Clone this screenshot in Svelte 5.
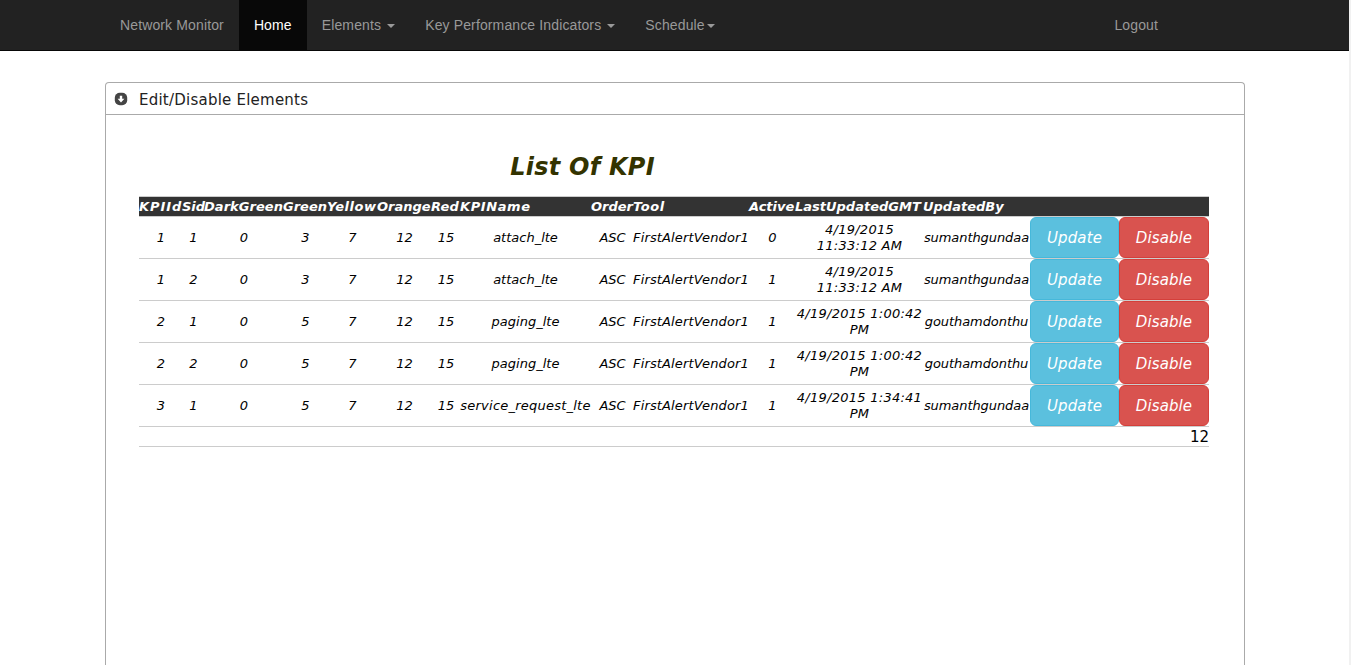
<script>
  const columns = [
    { name: 'KPIId', width: 43, spacing: 0.9 },
    { name: 'Sid', width: 22, spacing: 0 },
    { name: 'DarkGreen', width: 79, spacing: 0.05 },
    { name: 'Green', width: 44, spacing: 0 },
    { name: 'Yellow', width: 50, spacing: 0.5 },
    { name: 'Orange', width: 54, spacing: 0 },
    { name: 'Red', width: 29, spacing: 0.2 },
    { name: 'KPIName', width: 131, spacing: 0.6 },
    { name: 'Order', width: 42, spacing: 0 },
    { name: 'Tool', width: 116, spacing: 0.6 },
    { name: 'Active', width: 46, spacing: 0 },
    { name: 'LastUpdatedGMT', width: 128, spacing: 0 },
    { name: 'UpdatedBy', width: 107, spacing: 0 },
    { name: '', width: 89, spacing: 0 },
    { name: '', width: 90, spacing: 0 }
  ];

  const tool = 'FirstAlertVendor1';
  const rows = [
    [1, 1, 0, 3, 7, 12, 15, 'attach_lte', 'ASC', tool, 0, '4/19/2015\n11:33:12 AM', 'sumanthgundaa'],
    [1, 2, 0, 3, 7, 12, 15, 'attach_lte', 'ASC', tool, 1, '4/19/2015\n11:33:12 AM', 'sumanthgundaa'],
    [2, 1, 0, 5, 7, 12, 15, 'paging_lte', 'ASC', tool, 1, '4/19/2015 1:00:42\nPM', 'gouthamdonthu'],
    [2, 2, 0, 5, 7, 12, 15, 'paging_lte', 'ASC', tool, 1, '4/19/2015 1:00:42\nPM', 'gouthamdonthu'],
    [3, 1, 0, 5, 7, 12, 15, 'service_request_lte', 'ASC', tool, 1, '4/19/2015 1:34:41\nPM', 'sumanthgundaa']
  ];
</script>

<div class="page">
  <nav>
    <a class="brand" href="#home">Network Monitor</a>
    <a class="active" href="#home">Home</a>
    <a href="#elements">Elements <b class="caret"></b></a>
    <a href="#kpi">Key Performance Indicators <b class="caret"></b></a>
    <a href="#schedule">Schedule<b class="caret"></b></a>
    <a class="logout" href="#logout">Logout</a>
  </nav>

  <main>
    <header>
      <svg width="12" height="12" viewBox="0 0 12 12">
        <rect x="-0.2" y="-0.2" width="12.4" height="12.4" rx="5" fill="#444" />
        <path d="M4.8 2.8h2.4v3h2.2L6 9.4 2.6 5.8h2.2z" fill="#fff" />
      </svg>
      <span>Edit/Disable Elements</span>
    </header>

    <section>
      <h1>List Of KPI</h1>
      <table>
        <colgroup>
          {#each columns as column}<col style="width: {column.width}px" />{/each}
        </colgroup>
        <thead>
          <tr>{#each columns as column}<th style="letter-spacing: {column.spacing}px">{column.name}</th>{/each}</tr>
        </thead>
        <tbody>
          {#each rows as row}
            <tr>
              {#each row as value, i}
                <td class:number={i < 7} class:date={i === 11} class:long={i === 7 && value.length > 12} class:tool={i === 9} class:centered={i === 8 || i === 10} class:user={i === 12}>{value}</td>
              {/each}
              <td><button class="update">Update</button></td>
              <td><button class="disable">Disable</button></td>
            </tr>
          {/each}
          <tr class="pager"><td colspan="15">12</td></tr>
        </tbody>
      </table>
    </section>
  </main>
</div>

<style>
  :global(body) { margin: 0; background: #fff; }

  .page {
    box-sizing: border-box;
    height: 665px;
    overflow: hidden;
    display: flex;
    flex-direction: column;
    border-right: 2px solid #f1f1f1;
    font-family: 'DejaVu Sans', Verdana, sans-serif;
  }

  nav {
    box-sizing: border-box;
    flex: none;
    height: 51px;
    padding: 0 176px 0 105px;
    display: flex;
    background: #222;
    border-bottom: 1px solid #080808;
    font: 14px/20px 'Liberation Sans', Arial, sans-serif;
    letter-spacing: 0.13px;
  }
  nav a {
    display: flex;
    align-items: center;
    padding: 0 15px;
    color: #999;
    text-decoration: none;
    white-space: pre;
  }
  nav .active { background: #080808; color: #fff; }
  nav .logout { margin-left: auto; }
  .caret {
    margin: 1px 0 0 2px;
    border-top: 4px solid;
    border-left: 4px solid transparent;
    border-right: 4px solid transparent;
  }

  main {
    box-sizing: border-box;
    flex: 1;
    width: 1140px;
    margin: 31px 0 0 105px;
    border: 1px solid #aaa;
    border-bottom: 0;
    border-radius: 4px 4px 0 0;
  }
  header {
    display: flex;
    align-items: center;
    gap: 12px;
    height: 31px;
    padding: 0 9px;
    border-bottom: 1px solid #aaa;
    color: #222;
    font-size: 15px;
    line-height: 20px;
    letter-spacing: 0.23px;
  }
  header svg { overflow: visible; }
  header span { padding-top: 2px; }

  section { padding: 36px 35px 0 33px; }
  h1 {
    width: 887px;
    margin: 0 0 13px;
    color: #330;
    font: italic bold 24px/32px 'DejaVu Sans', Verdana, sans-serif;
    letter-spacing: 0.25px;
    text-align: center;
  }

  table {
    width: 1070px;
    table-layout: fixed;
    border-collapse: separate;
    border-spacing: 0;
    border-top: 1px solid #ccc;
    color: #000;
    font-size: 13px;
    font-style: italic;
    line-height: 16px;
  }
  th, td {
    padding: 0;
    border-bottom: 1px solid #ccc;
    white-space: pre;
  }
  th {
    height: 19px;
    background: #333;
    color: #fff;
    text-align: left;
  }
  td { height: 41px; text-align: center; }
  .number { padding-left: 1px; }
  .centered { padding-left: 1px; }
  .long { letter-spacing: 0.23px; }
  .tool { letter-spacing: 0.15px; }
  .date { padding-left: 1px; letter-spacing: 0.26px; }
  .user { letter-spacing: -0.07px; }

  button {
    display: block;
    box-sizing: border-box;
    width: 100%;
    height: 41px;
    padding: 0;
    border: 1px solid;
    border-radius: 6px;
    color: #fff;
    font: italic 15px/20px 'DejaVu Sans', Verdana, sans-serif;
    letter-spacing: 0.1px;
  }
  .update { background: #5bc0de; border-color: #46b8da; }
  .disable { background: #d9534f; border-color: #d43f3a; }

  .pager td {
    height: 17px;
    padding-top: 2px;
    font-size: 15px;
    font-style: normal;
    line-height: 17px;
    text-align: right;
  }
</style>
